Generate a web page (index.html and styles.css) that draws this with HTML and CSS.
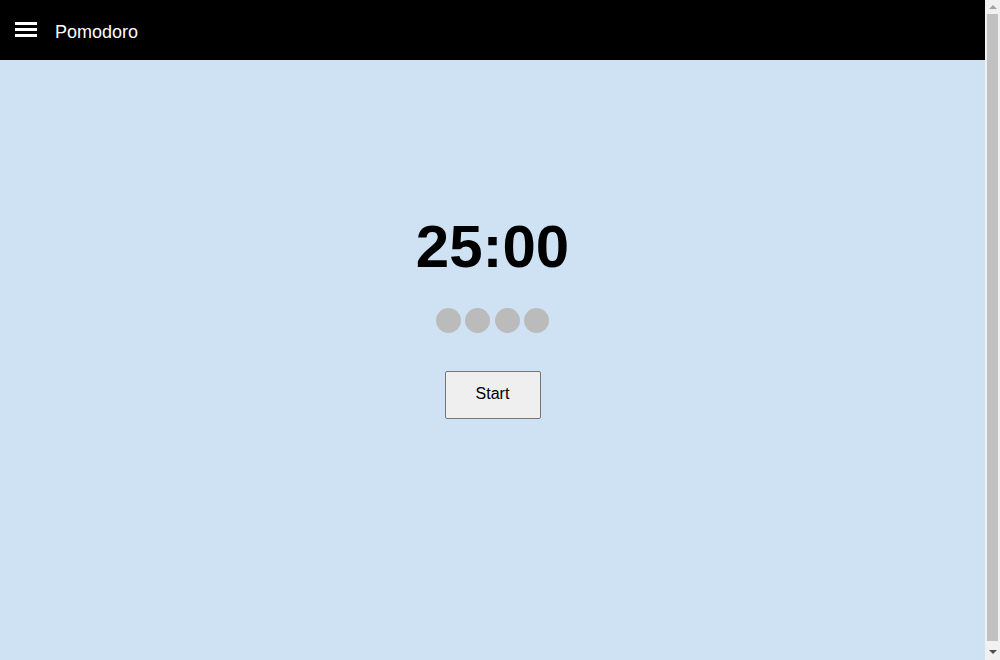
FILE: index.html
```html
<!DOCTYPE html>
<html lang="en">
<head>
<meta charset="utf-8">
<title>Pomodoro</title>
<link rel="stylesheet" href="styles.css">
</head>
<body>
<header class="topbar">
  <button class="menu-btn" aria-label="Menu">
    <span class="bar"></span>
    <span class="bar"></span>
    <span class="bar"></span>
  </button>
  <span class="title">Pomodoro</span>
</header>
<main class="timer-area">
  <h1 class="time">25:00</h1>
  <div class="dots">
    <span class="dot"></span>
    <span class="dot"></span>
    <span class="dot"></span>
    <span class="dot"></span>
  </div>
  <button class="start-btn">Start</button>
</main>
<div class="scroll-rail" aria-hidden="true">
  <span class="arrow arrow-up"></span>
  <span class="thumb"></span>
  <span class="arrow arrow-down"></span>
</div>
</body>
</html>
```

FILE: styles.css
```css
html, body {
  margin: 0;
  padding: 0;
}
body {
  font-family: "Liberation Sans", Arial, sans-serif;
  background: #cfe2f3;
  padding-right: 15px;
}
.topbar {
  height: 60px;
  background: #000;
  display: flex;
  align-items: center;
  padding-left: 15px;
  box-sizing: border-box;
}
.menu-btn {
  background: none;
  border: 0;
  padding: 0;
  margin: 0 0 1px;
  width: 22px;
  display: flex;
  flex-direction: column;
  gap: 3px;
  cursor: pointer;
}
.bar {
  display: block;
  width: 22px;
  height: 3px;
  background: #fff;
}
.title {
  color: #fff;
  font-size: 18px;
  margin-left: 18px;
  padding-top: 4px;
}
.timer-area {
  min-height: 600px;
  display: flex;
  flex-direction: column;
  align-items: center;
  padding-top: 152px;
  box-sizing: border-box;
}
.time {
  margin: 0;
  font-size: 60px;
  font-weight: bold;
  color: #000;
  line-height: normal;
}
.dots {
  display: flex;
  gap: 4.4px;
  margin-top: 27px;
}
.dot {
  width: 25px;
  height: 25px;
  border-radius: 50%;
  background: #bbbbbb;
}
.start-btn {
  margin-top: 38px;
  box-sizing: border-box;
  width: 96px;
  height: 48px;
  padding: 0 0 2px;
  font-family: "Liberation Sans", Arial, sans-serif;
  font-size: 16px;
  background: #efefef;
  border: 1px solid #767676;
  border-radius: 2px;
  color: #000;
}

/* decorative classic scrollbar rail */
.scroll-rail {
  position: fixed;
  top: 0;
  right: 0;
  width: 15px;
  height: 100vh;
  background: #f1f1f1;
  display: flex;
  flex-direction: column;
  align-items: center;
  box-sizing: border-box;
  padding: 5px 0 6px;
}
.arrow {
  width: 0;
  height: 0;
  border-left: 4px solid transparent;
  border-right: 4px solid transparent;
}
.arrow-up {
  border-bottom: 4px solid #a3a3a3;
}
.arrow-down {
  border-top: 4px solid #505050;
}
.thumb {
  flex: 1;
  width: 11px;
  margin: 5px 0 9px;
  background: #c1c1c1;
}
```
